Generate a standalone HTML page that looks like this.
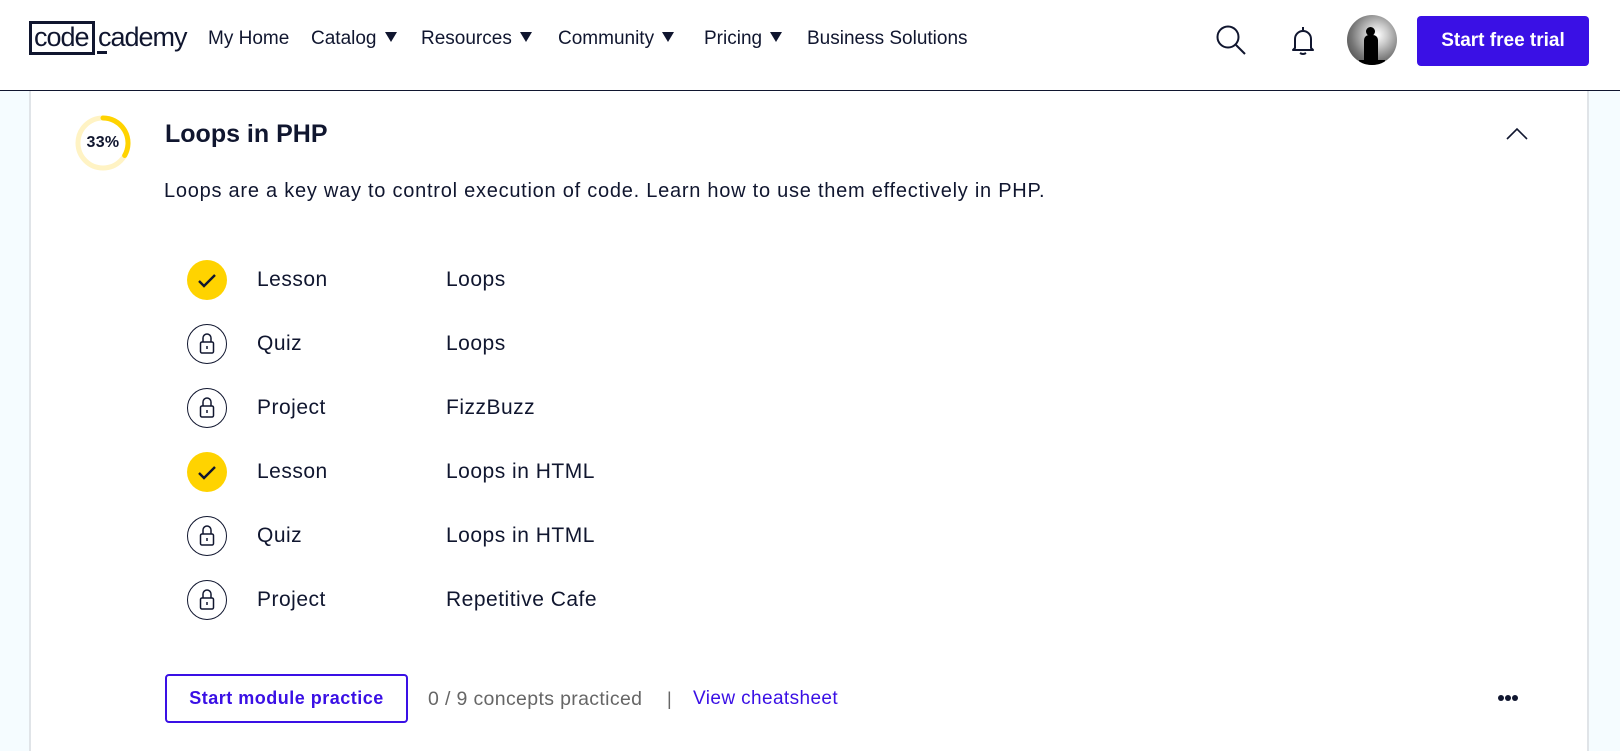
<!DOCTYPE html>
<html><head><meta charset="utf-8"><style>
*{margin:0;padding:0;box-sizing:border-box}
body{width:1620px;height:741px;overflow:hidden;background:#f5fcff;font-family:"Liberation Sans",sans-serif;color:#10162f;position:relative}
.a{position:absolute;white-space:nowrap}
header{position:absolute;left:0;top:0;width:1620px;height:91px;background:#fff;border-bottom:1px solid #10162f}
.nav{font-size:19px;top:27px;line-height:24px}
.tri{display:inline-block;width:0;height:0;border-left:6px solid transparent;border-right:6px solid transparent;border-top:10px solid #10162f;margin-left:8px;vertical-align:2px}
.card{position:absolute;left:29px;top:91px;width:1560px;height:660px;background:#fff;border-left:2px solid #e0e4e8;border-right:2px solid #e0e4e8}
.row{font-size:21px;line-height:26px;letter-spacing:0.5px}
.ic{position:absolute;width:40px;height:40px;border-radius:50%}
.done{background:#ffd300}
.lock{border:1.3px solid #10162f}
</style></head><body>
<header>
 <div class="a" style="left:29px;top:21px;width:66px;height:34px;border:3px solid #10162f"></div>
 <div class="a" style="left:34px;top:20px;font-size:27px;line-height:34px;letter-spacing:-1px">code</div>
 <div class="a" style="left:98px;top:20px;font-size:27px;line-height:34px;letter-spacing:-1px">cademy</div>
 <div class="a" style="left:97px;top:51px;width:10px;height:3px;background:#10162f"></div>
 <div class="a nav" style="left:208px">My Home</div>
 <div class="a nav" style="left:311px">Catalog<span class="tri"></span></div>
 <div class="a nav" style="left:421px">Resources<span class="tri"></span></div>
 <div class="a nav" style="left:558px">Community<span class="tri"></span></div>
 <div class="a nav" style="left:704px">Pricing<span class="tri"></span></div>
 <div class="a nav" style="left:807px">Business Solutions</div>
 <svg class="a" style="left:1215px;top:24px" width="34" height="34" viewBox="0 0 34 34"><circle cx="13" cy="13" r="10.5" fill="none" stroke="#10162f" stroke-width="2"/><path d="M21 21l9 9" stroke="#10162f" stroke-width="2"/></svg>
 <svg class="a" style="left:1288px;top:24px" width="30" height="32" viewBox="0 0 30 32"><path d="M15 3v3M7 24V15a8 8 0 0116 0v9l2 2H5l2-2z" fill="none" stroke="#10162f" stroke-width="2" stroke-linejoin="round"/><path d="M12 29q3 2 6 0" fill="none" stroke="#10162f" stroke-width="2"/></svg>
 <div class="a" style="left:1347px;top:15px;width:50px;height:50px;border-radius:50%;background:radial-gradient(circle at 60% 40%,#fff 0,#ccc 25%,#777 60%,#333 100%);overflow:hidden">
  <div style="position:absolute;left:19px;top:12px;width:9px;height:9px;border-radius:50%;background:#000"></div>
  <div style="position:absolute;left:17px;top:20px;width:14px;height:26px;border-radius:5px 5px 0 0;background:#000"></div>
  <div style="position:absolute;left:12px;top:45px;width:26px;height:6px;background:#000"></div>
 </div>
 <div class="a" style="left:1417px;top:16px;width:172px;height:50px;background:#3a10e5;border-radius:4px;color:#fff;font-weight:bold;font-size:19px;line-height:50px;text-align:center">Start free trial</div>
</header>
<div class="card"></div>
<svg class="a" style="left:75px;top:115px" width="56" height="56" viewBox="0 0 56 56"><circle cx="28" cy="28" r="25" fill="none" stroke="#fff3c4" stroke-width="5"/><path d="M28 3A25 25 0 0 1 49.65 40.5" fill="none" stroke="#ffd300" stroke-width="5" stroke-linecap="round"/></svg>
<div class="a" style="left:75px;top:134px;width:56px;text-align:center;font-size:16px;line-height:18px;font-weight:bold;letter-spacing:0.3px">33%</div>
<div class="a" style="left:165px;top:118px;font-size:25px;font-weight:bold;line-height:32px">Loops in PHP</div>
<svg class="a" style="left:1505px;top:127px" width="24" height="14" viewBox="0 0 24 14"><path d="M2 12L12 2l10 10" fill="none" stroke="#10162f" stroke-width="1.6"/></svg>
<div class="a" style="left:164px;top:179px;font-size:20px;line-height:24px;letter-spacing:0.75px">Loops are a key way to control execution of code. Learn how to use them effectively in PHP.</div>

<div class="ic done" style="left:187px;top:260px"></div>
<div class="ic lock" style="left:187px;top:324px"></div>
<div class="ic lock" style="left:187px;top:388px"></div>
<div class="ic done" style="left:187px;top:452px"></div>
<div class="ic lock" style="left:187px;top:516px"></div>
<div class="ic lock" style="left:187px;top:580px"></div>
<svg class="a" style="left:187px;top:260px" width="40" height="404" viewBox="0 0 40 404">
 <path d="M12 21l5 5 11-11" fill="none" stroke="#10162f" stroke-width="2.4"/>
 <path d="M12 213l5 5 11-11" fill="none" stroke="#10162f" stroke-width="2.4"/>
 <g fill="none" stroke="#10162f" stroke-width="1.5">
  <rect x="13.5" y="82" width="13" height="11" rx="1.5"/><path d="M16 82v-4a4 4 0 018 0v4"/><path d="M20 86v3"/>
  <rect x="13.5" y="146" width="13" height="11" rx="1.5"/><path d="M16 146v-4a4 4 0 018 0v4"/><path d="M20 150v3"/>
  <rect x="13.5" y="274" width="13" height="11" rx="1.5"/><path d="M16 274v-4a4 4 0 018 0v4"/><path d="M20 278v3"/>
  <rect x="13.5" y="338" width="13" height="11" rx="1.5"/><path d="M16 338v-4a4 4 0 018 0v4"/><path d="M20 342v3"/>
 </g>
</svg>
<div class="a row" style="left:257px;top:267px">Lesson</div><div class="a row" style="left:446px;top:267px">Loops</div>
<div class="a row" style="left:257px;top:331px">Quiz</div><div class="a row" style="left:446px;top:331px">Loops</div>
<div class="a row" style="left:257px;top:395px">Project</div><div class="a row" style="left:446px;top:395px">FizzBuzz</div>
<div class="a row" style="left:257px;top:459px">Lesson</div><div class="a row" style="left:446px;top:459px">Loops in HTML</div>
<div class="a row" style="left:257px;top:523px">Quiz</div><div class="a row" style="left:446px;top:523px">Loops in HTML</div>
<div class="a row" style="left:257px;top:587px">Project</div><div class="a row" style="left:446px;top:587px">Repetitive Cafe</div>

<div class="a" style="left:165px;top:674px;width:243px;height:49px;border:2px solid #3a10e5;border-radius:4px;color:#3a10e5;font-weight:bold;font-size:18px;line-height:45px;text-align:center;letter-spacing:0.5px">Start module practice</div>
<div class="a" style="left:428px;top:687px;font-size:19.5px;line-height:24px;color:#666;letter-spacing:0.35px">0 / 9 concepts practiced</div>
<div class="a" style="left:667px;top:687px;font-size:18px;line-height:24px;color:#666">|</div>
<div class="a" style="left:693px;top:687px;font-size:19px;line-height:24px;color:#3a10e5;letter-spacing:0.4px">View cheatsheet</div>
<svg class="a" style="left:1497px;top:693px" width="22" height="10" viewBox="0 0 22 10"><circle cx="4" cy="5" r="3" fill="#10162f"/><circle cx="11" cy="5" r="3" fill="#10162f"/><circle cx="18" cy="5" r="3" fill="#10162f"/></svg>
</body></html>
